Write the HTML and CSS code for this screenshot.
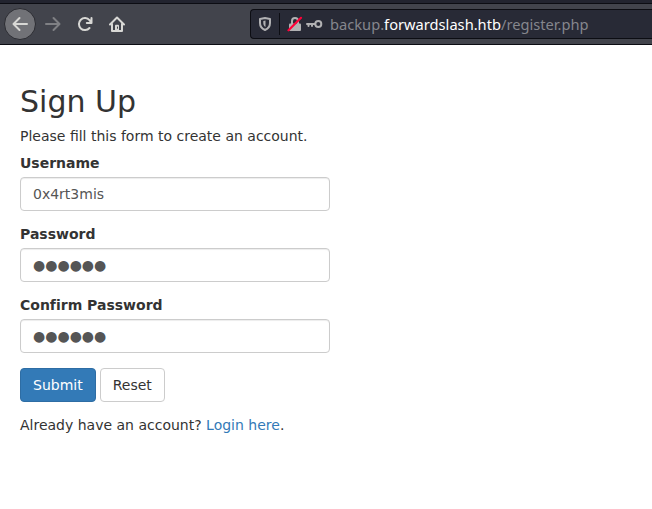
FILE: index.html
```html
<!DOCTYPE html>
<html lang="en">
<head>
<meta charset="utf-8">
<title>Sign Up</title>
<link rel="stylesheet" href="styles.css">
</head>
<body>
<header class="toolbar">
  <nav class="nav">
    <span class="back"><svg width="16" height="16" viewBox="0 0 16 16"><path d="M15 8H2M7.500 2 1.500 8l6 6"/></svg></span>
    <svg class="forward" width="16" height="16" viewBox="0 0 16 16"><path d="M1 8h13M8.500 2l6 6-6 6"/></svg>
    <svg class="reload" width="16" height="16" viewBox="0 0 16 16"><path d="M12.500 12A6 6 0 1 1 12.500 4.200L14 6.200M14.500 2v5H9.800"/></svg>
    <svg class="home" width="16" height="16" viewBox="0 0 16 16"><path d="M1 8.500 8 1.500l7 7M3 8v7h10V8"/><path class="solid" d="M6 15V9.500q0-.8.800-.8h2.400q.8 0 .8.800V15z"/><path class="hole" d="M8.500 11v1.300"/></svg>
  </nav>
  <div class="urlbar">
    <svg class="shield" width="14" height="16" viewBox="0 0 14 16"><path d="M7 2 12 3v4c0 3.500-2 5.700-5 7-3-1.300-5-3.500-5-7V3z"/><path class="solid" d="M7.500 4.500v6.500C6 10 5.300 8.700 5.300 7V4.900z"/></svg>
    <span class="divider"></span>
    <svg class="lock" width="16" height="16" viewBox="0 0 16 16"><path d="M5 8V5a3 3 0 0 1 6 0v3"/><rect class="solid" x="2" y="7.500" width="12" height="7.500" rx="1"/><path class="slash" d="M1.500 14.300 14 1.800"/></svg>
    <svg class="key" width="17" height="10" viewBox="0 0 17 10"><path d="M9 5H1M2.500 5v2M6 5v2"/><circle cx="12.300" cy="5" r="3"/></svg>
    <span class="url">backup.<b>forwardslash.htb</b>/register.php</span>
  </div>
</header>
<main class="wrapper">
  <h2>Sign Up</h2>
  <p>Please fill this form to create an account.</p>
  <form>
    <div class="group"><label>Username</label><div class="control">0x4rt3mis</div></div>
    <div class="group"><label>Password</label><div class="control">●●●●●●</div></div>
    <div class="group"><label>Confirm Password</label><div class="control">●●●●●●</div></div>
    <div class="group actions"><button class="btn primary" type="button">Submit</button><button class="btn" type="button">Reset</button></div>
    <p>Already have an account? <a href="#">Login here</a>.</p>
  </form>
</main>
</body>
</html>
```
FILE: styles.css
```css
* { box-sizing: border-box; }
body {
  margin: 0;
  background: #fff;
  color: #333;
  font: 14px/17px "DejaVu Sans", sans-serif;
  overflow: hidden;
}
.toolbar {
  display: flex;
  height: 45px;
  padding-top: 5px;
  background: linear-gradient(#22242f 0 3px, #0c0d13 3px 4px, #42444c 4px 44px, #0c0d13 44px);
}
.nav {
  display: flex;
  align-items: center;
  width: 250px;
  height: 38px;
  padding-left: 4px;
}
svg { flex: none; fill: none; stroke: #d8d8d5; stroke-width: 2; stroke-linecap: round; stroke-linejoin: round; }
.solid { fill: #d8d8d5; stroke: none; }
.back {
  display: flex;
  align-items: center;
  justify-content: center;
  width: 32px;
  height: 32px;
  border: 1px solid #2b2c32;
  border-radius: 50%;
  background: #717277;
}
.forward { margin-left: 9px; stroke: #7f8084; }
.reload { margin-left: 16px; }
.home { margin-left: 16px; }
.hole { stroke: #42444c; stroke-width: 1; }
.urlbar {
  display: flex;
  align-items: center;
  flex: 1;
  height: 30px;
  margin-top: 4px;
  padding-left: 7px;
  border: 1px solid #0c0d13;
  border-right: 0;
  border-radius: 4px 0 0 4px;
  background: #282a36;
}
.urlbar svg { stroke: #b1b1b3; }
.urlbar .solid { fill: #b1b1b3; stroke: none; }
.divider { width: 1px; height: 22px; margin: 0 7px; background: #0c0d13; }
.urlbar .lock .slash { stroke: #ff0039; stroke-width: 2.2; }
.key { margin-left: 3px; }
.url {
  margin-left: 7px;
  color: #85868d;
  font: 14.67px/20px "Noto Sans", sans-serif;
  white-space: nowrap;
}
.url b { color: #fff; font-weight: 400; }
.wrapper { width: 350px; padding: 20px; }
h2 { margin: 20px 0 10px; font-size: 30px; font-weight: 400; line-height: 33px; }
p { margin: 0 0 10px; }
.group { margin-bottom: 15px; }
label { display: block; margin-bottom: 5px; font-weight: 700; font-variant-ligatures: none; }
.control {
  height: 34px;
  padding: 6px 12px;
  border: 1px solid #ccc;
  border-radius: 4px;
  box-shadow: inset 0 1px 1px rgba(0, 0, 0, .075);
  color: #555;
  line-height: 20px;
}
.actions { display: flex; gap: 4px; }
.btn {
  height: 34px;
  padding: 6px 12px;
  border: 1px solid #ccc;
  border-radius: 4px;
  background: #fff;
  color: #333;
  font: 14px/20px "DejaVu Sans", sans-serif;
}
.primary { border-color: #2e6da4; background: #337ab7; color: #fff; }
a { color: #337ab7; text-decoration: none; }
```
